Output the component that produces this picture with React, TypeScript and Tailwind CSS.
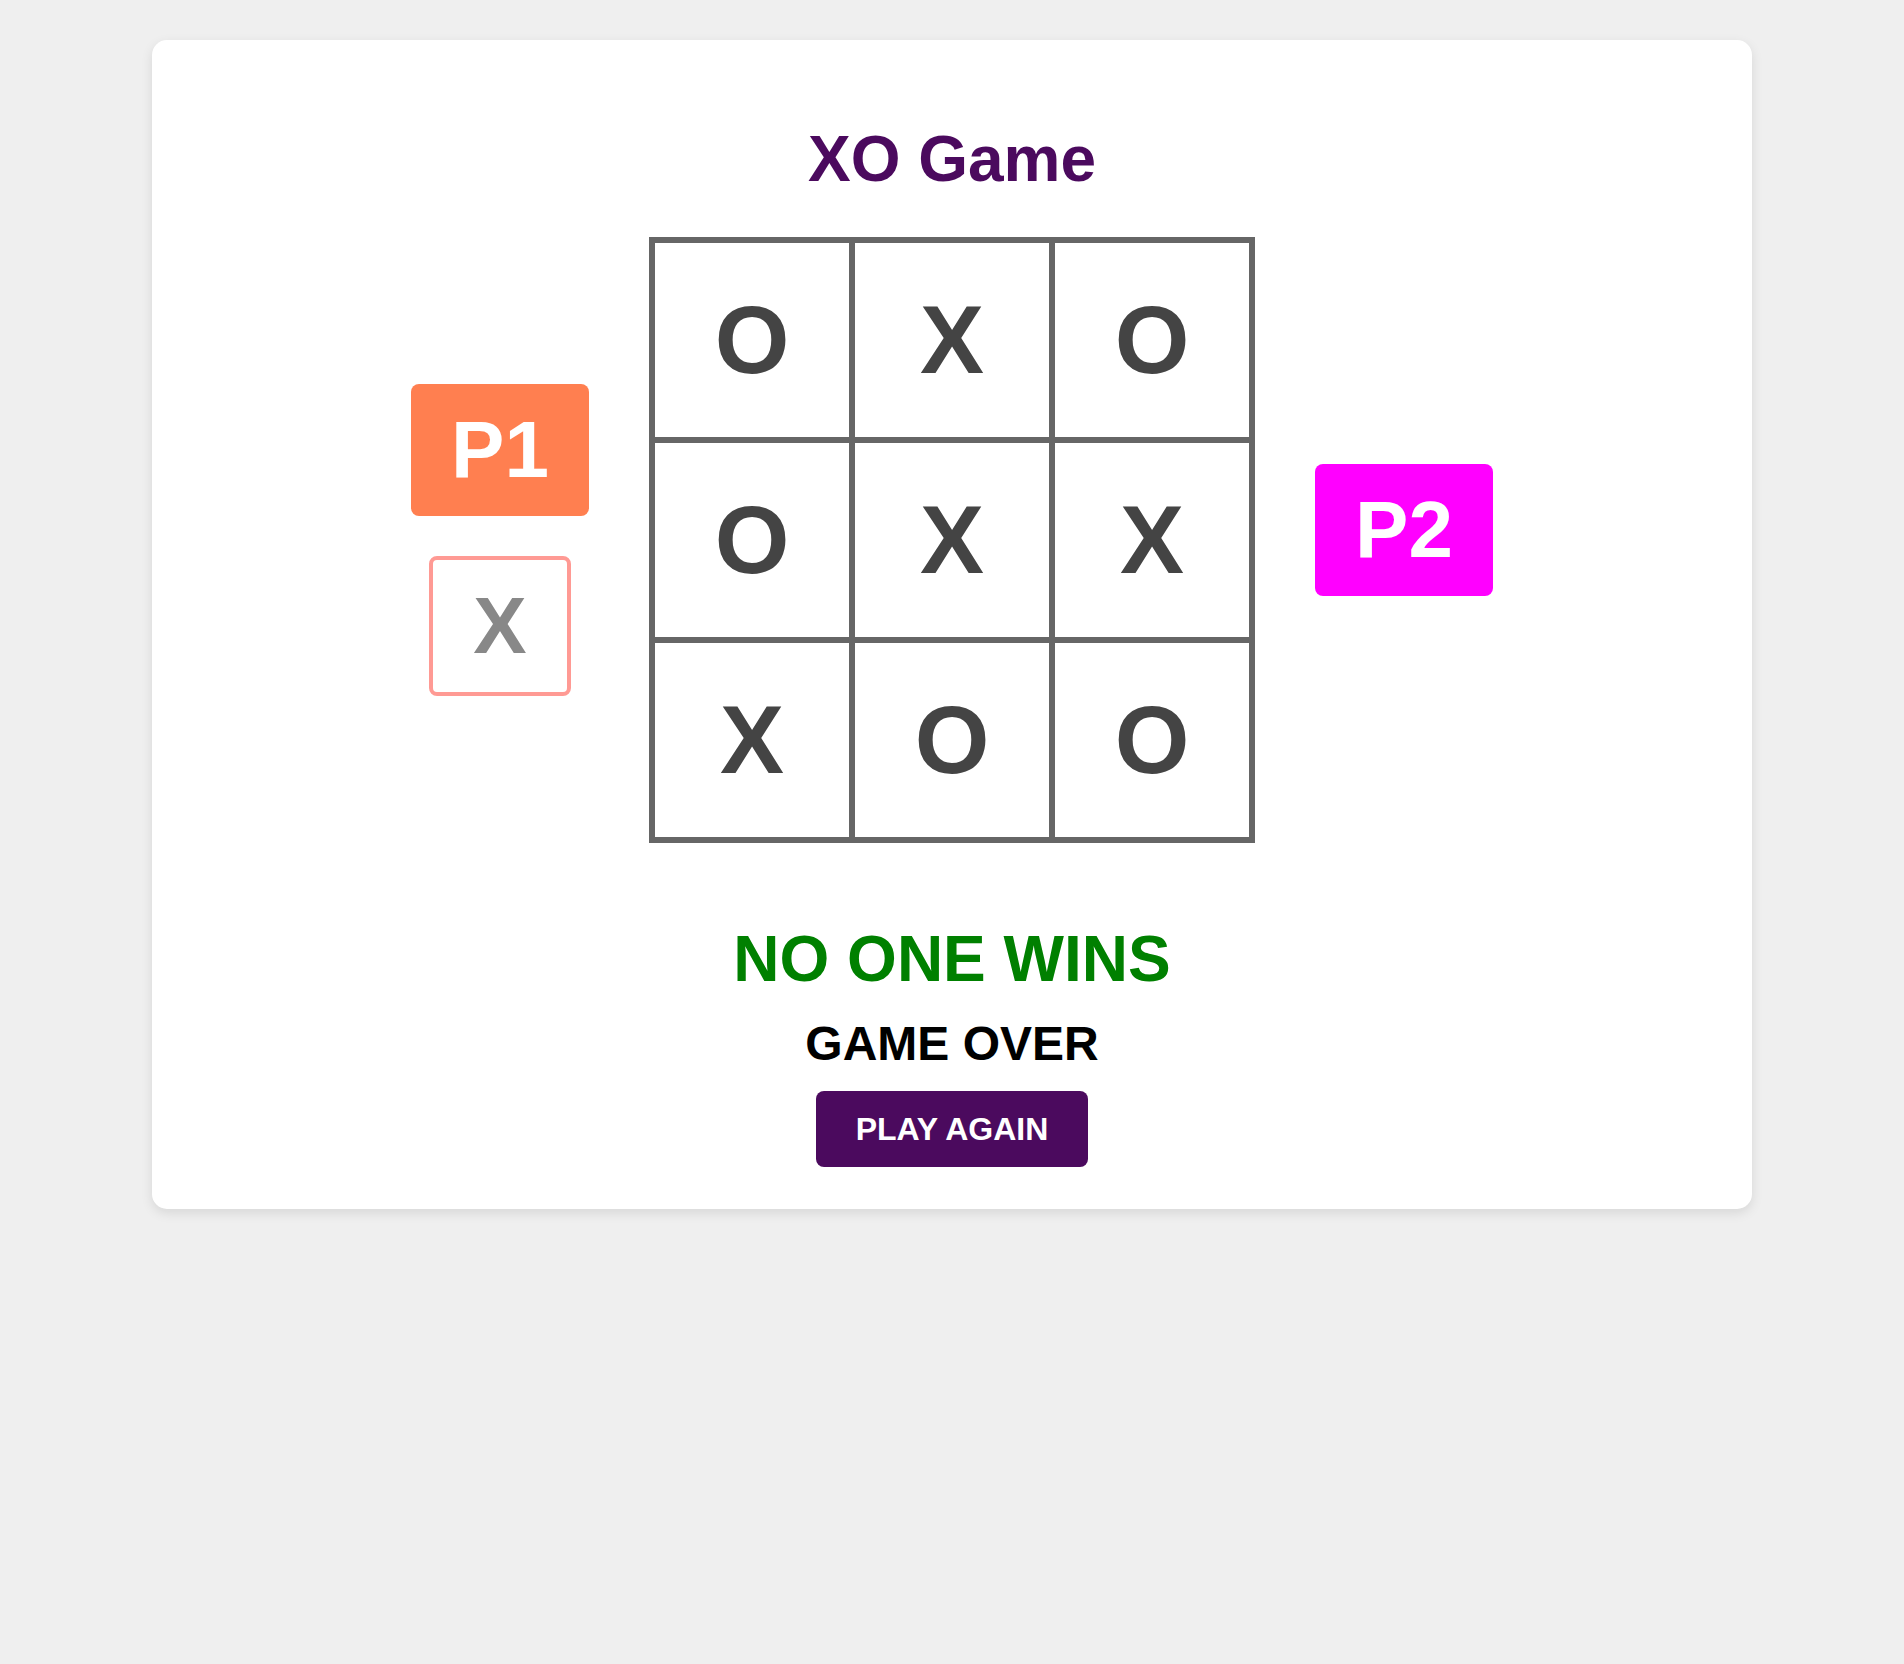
import React from "react";

const board = ["O", "X", "O", "O", "X", "X", "X", "O", "O"];

const App = () => {
  return (
    <div
      className="min-h-[1664px] bg-[#efefef] pt-10"
      style={{ fontFamily: '"Liberation Sans", Arial, sans-serif' }}
    >
      <div className="mx-auto flex h-[1169px] w-[1600px] flex-col items-center rounded-[15px] bg-white pt-[87px] shadow-[0_4px_12px_rgba(0,0,0,0.1)]">
        <h1 className="text-[64px] font-bold leading-[64px] text-[#4b0a5e]">
          XO Game
        </h1>

        <div className="mt-[46px] flex items-center gap-[60px]">
          <div className="flex w-[178px] flex-col items-center gap-10">
            <div className="flex h-[132px] w-[178px] items-center justify-center rounded-lg bg-[#ff7f50] text-[80px] font-bold leading-none text-white">
              P1
            </div>
            <div className="flex h-[140px] w-[142px] items-center justify-center rounded-lg border-4 border-[#ff9a94] text-[80px] font-bold leading-none text-[#888888]">
              X
            </div>
          </div>

          <div className="grid grid-cols-3 border-[3px] border-[#666666]">
            {board.map((v, i) => (
              <div
                key={i}
                className="flex h-[200px] w-[200px] items-center justify-center border-[3px] border-[#666666] text-[96px] font-bold leading-none text-[#444444]"
              >
                {v}
              </div>
            ))}
          </div>

          <div className="flex w-[178px] flex-col items-center">
            <div className="mb-5 flex h-[132px] w-[178px] items-center justify-center rounded-lg bg-[#ff00ff] text-[80px] font-bold leading-none text-white">
              P2
            </div>
          </div>
        </div>

        <h2 className="mt-[84px] text-[64px] font-bold leading-[64px] text-[#008000]">
          NO ONE WINS
        </h2>
        <h3 className="mt-[29px] text-[48px] font-bold leading-[48px] text-black">
          GAME OVER
        </h3>
        <button className="mt-[23px] flex h-[76px] w-[272px] items-center justify-center rounded-lg bg-[#4b0a5e] text-[32px] font-bold leading-none text-white">
          PLAY AGAIN
        </button>
      </div>
    </div>
  );
};

export default App;
